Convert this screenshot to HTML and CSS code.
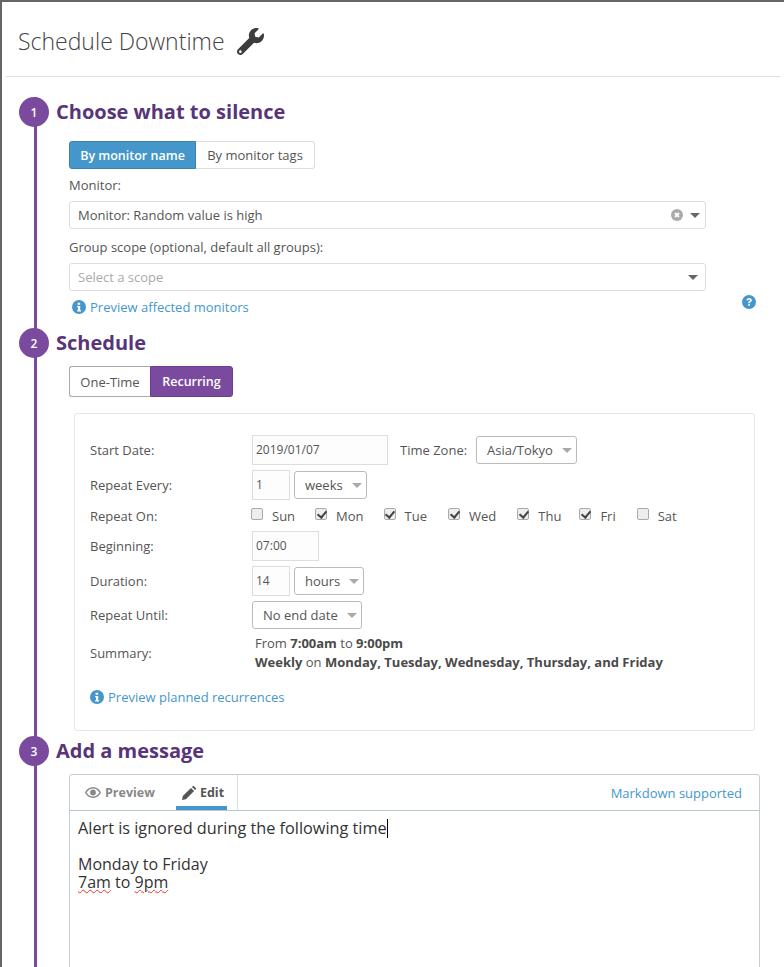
FILE: index.html
```html
<!DOCTYPE html>
<html lang="en">
<head>
<meta charset="utf-8">
<title>Schedule Downtime</title>
<link rel="stylesheet" href="styles.css">
</head>
<body>
<div class="frame">
  <header class="page-head">
    <h1 class="page-title">Schedule Downtime</h1>
    <svg class="wrench" viewBox="0 0 512 512"><path d="M507.730 109.100c-2.240-9.030-13.540-12.090-20.120-5.510l-74.360 74.360-67.880-11.310-11.310-67.880 74.360-74.360c6.620-6.620 3.430-17.900-5.660-20.160-47.380-11.740-99.550.91-136.580 37.930-39.640 39.640-50.550 97.100-34.050 147.200L18.740 402.760c-24.990 24.990-24.990 65.510 0 90.500 24.990 24.990 65.510 24.990 90.500 0l213.210-213.210c50.120 16.710 107.470 5.680 147.370-34.220 37.070-37.070 49.700-89.320 37.910-136.730zM64 472c-13.250 0-24-10.750-24-24 0-13.260 10.750-24 24-24s24 10.740 24 24c0 13.250-10.750 24-24 24z"/></svg>
  </header>

  <main class="steps">
    <div class="rail"></div>

    <section class="step step-one">
      <div class="step-head"><span class="badge">1</span><h2 class="step-title">Choose what to silence</h2></div>
      <div class="step-body">
        <div class="toggle toggle-blue">
          <span class="toggle-btn active">By monitor name</span><span class="toggle-btn">By monitor tags</span>
        </div>
        <div class="field-label first">Monitor:</div>
        <div class="combo">
          <span>Monitor: Random value is high</span>
          <span class="combo-tools">
            <svg class="clear" viewBox="0 0 12 12"><circle cx="6" cy="6" r="6" fill="#aaa"/><path d="M4 4l4 4M8 4l-4 4" stroke="#fff" stroke-width="1.800"/></svg>
            <i class="caret dark"></i>
          </span>
        </div>
        <div class="field-label">Group scope (optional, default all groups):</div>
        <div class="combo placeholder">
          <span>Select a scope</span>
          <span class="combo-tools"><i class="caret dark"></i></span>
        </div>
        <a class="link preview-affected">
          <svg class="info" viewBox="0 0 14 14"><circle cx="7" cy="7" r="7"/><path d="M5.600 2.700h2.600v2.100H5.600zM5.100 5.900h3.100v4.300h.9v1.300H5.100v-1.300H6V7.200h-.9z" fill="#fff"/></svg>Preview affected monitors
        </a>
        <svg class="help" viewBox="0 0 14 14"><circle cx="7" cy="7" r="7" fill="#4597cb"/><path d="M4.500 5.300C4.700 3.900 5.700 3 7.200 3c1.500 0 2.600.9 2.600 2.200 0 1-.6 1.500-1.300 1.900-.6.400-.7.600-.7 1.100H6.200c0-1 .3-1.500 1-2 .6-.4.900-.6.900-1 0-.4-.4-.7-.9-.7-.6 0-1 .3-1.100 1zM6.200 9h1.700v1.700H6.200z" fill="#fff"/></svg>
      </div>
    </section>

    <section class="step step-two">
      <div class="step-head"><span class="badge">2</span><h2 class="step-title">Schedule</h2></div>
      <div class="step-body">
        <div class="toggle toggle-purple">
          <span class="toggle-btn">One-Time</span><span class="toggle-btn active">Recurring</span>
        </div>
        <div class="panel">
          <div class="form-grid">
            <div class="row row-30">
              <span class="row-label">Start Date:</span>
              <span class="input w-date">2019/01/07</span>
              <span class="tz-label">Time Zone:</span>
              <span class="select w-tz">Asia/Tokyo<i class="caret"></i></span>
            </div>
            <div class="row row-30">
              <span class="row-label">Repeat Every:</span>
              <span class="input w-num">1</span>
              <span class="select w-weeks">weeks<i class="caret"></i></span>
            </div>
            <div class="row row-days">
              <span class="row-label">Repeat On:</span>
              <span class="days">
                <label class="day d-sun"><i class="box"></i>Sun</label>
                <label class="day d-mon"><i class="box checked"></i>Mon</label>
                <label class="day d-tue"><i class="box checked"></i>Tue</label>
                <label class="day d-wed"><i class="box checked"></i>Wed</label>
                <label class="day d-thu"><i class="box checked"></i>Thu</label>
                <label class="day d-fri"><i class="box checked"></i>Fri</label>
                <label class="day"><i class="box"></i>Sat</label>
              </span>
            </div>
            <div class="row row-30">
              <span class="row-label">Beginning:</span>
              <span class="input w-time">07:00</span>
            </div>
            <div class="row row-30">
              <span class="row-label">Duration:</span>
              <span class="input w-num">14</span>
              <span class="select w-hours">hours<i class="caret"></i></span>
            </div>
            <div class="row row-28">
              <span class="row-label">Repeat Until:</span>
              <span class="select w-end">No end date<i class="caret"></i></span>
            </div>
            <div class="row row-summary">
              <span class="row-label">Summary:</span>
              <div class="summary">
                <div>From <b>7:00am</b> to <b>9:00pm</b></div>
                <div><b>Weekly</b> on <b>Monday, Tuesday, Wednesday, Thursday, and Friday</b></div>
              </div>
            </div>
          </div>
          <a class="link preview-planned">
            <svg class="info" viewBox="0 0 14 14"><circle cx="7" cy="7" r="7"/><path d="M5.600 2.700h2.600v2.100H5.600zM5.100 5.900h3.100v4.300h.9v1.300H5.100v-1.300H6V7.200h-.9z" fill="#fff"/></svg>Preview planned recurrences
          </a>
        </div>
      </div>
    </section>

    <section class="step step-three">
      <div class="step-head"><span class="badge">3</span><h2 class="step-title">Add a message</h2></div>
      <div class="step-body">
        <div class="editor">
          <div class="tabs">
            <span class="tab">
              <svg class="tab-icon eye" viewBox="0 0 16 11"><path d="M8 0C4.500 0 1.500 2.100 0 5.500 1.500 8.900 4.500 11 8 11s6.500-2.100 8-5.500C14.500 2.100 11.500 0 8 0zm0 9.600C5.300 9.600 3 8 1.600 5.500 3 3 5.300 1.400 8 1.400S13 3 14.400 5.500C13 8 10.700 9.600 8 9.600zM8 2.600a2.900 2.900 0 1 0 0 5.800 2.900 2.900 0 0 0 0-5.800z"/></svg>Preview
            </span>
            <span class="tab tab-active">
              <svg class="tab-icon pencil" viewBox="0 0 14 14"><path d="M0 14l.8-3.900L9 1.900l3.100 3.100-8.200 8.200zM10 .9l.6-.6c.4-.4 1-.4 1.400 0l1.700 1.700c.4.400.4 1 0 1.400l-.6.600z"/></svg>Edit
            </span>
            <span class="tab-rule"></span>
            <a class="md-link">Markdown supported</a>
          </div>
          <div class="editor-body">
            <div class="msg-line msg-first">Alert is ignored during the following time<span class="cursor"></span></div>
            <div class="msg-line">&nbsp;</div>
            <div class="msg-line">Monday to Friday</div>
            <div class="msg-line msg-last"><span class="typo">7am</span> to <span class="typo">9pm</span></div>
          </div>
        </div>
      </div>
    </section>
  </main>
</div>
</body>
</html>
```

FILE: styles.css
```css
* { box-sizing: border-box; }
html, body { margin: 0; padding: 0; background: #fff; }
body {
  width: 784px;
  height: 967px;
  overflow: hidden;
  font-family: "Open Sans", "Noto Sans", sans-serif;
  font-size: 13px;
  color: #555;
}
.frame {
  height: 967px;
  border-top: 2px solid #666;
  border-left: 2px solid #666;
  overflow: hidden;
}
.page-head {
  display: flex;
  align-items: center;
  height: 75px;
  margin: 0 4px 0 4px;
  padding: 0 0 0 12px;
  border-bottom: 1px solid #ddd;
}
.page-title {
  margin: 0;
  font-size: 23px;
  font-weight: 300;
  color: #444;
  line-height: 78px;
  height: 75px;
}
.wrench { width: 27px; height: 27px; margin: 4px 0 0 12px; fill: #3d3d3d; }

.steps { position: relative; padding-left: 17px; }
.rail {
  position: absolute;
  left: 32px;
  top: 20px;
  bottom: 0;
  width: 3px;
  background: #7a4a9f;
}
.step { position: relative; }
.step-head { display: flex; align-items: center; height: 30px; }
.badge {
  flex: none;
  width: 30px;
  height: 30px;
  border-radius: 50%;
  background: #7a4a9f;
  color: #fff;
  font-size: 12px;
  font-weight: 600;
  display: flex;
  align-items: center;
  justify-content: center;
}
.step-title {
  margin: 0 0 2px 7px;
  font-size: 20px;
  font-weight: 700;
  color: #583579;
}
.step-body { position: relative; padding-left: 50px; }
.step-one { padding-top: 20px; }
.step-one .step-body { padding-top: 14px; height: 201px; }
.step-two .step-body { padding-top: 8px; height: 378px; }
.step-three .step-body { padding-top: 8px; }

.toggle { display: inline-flex; vertical-align: top; }
.toggle-btn {
  display: flex;
  align-items: center;
  justify-content: center;
  border: 1px solid #ddd;
  background: #fff;
  color: #555;
}
.toggle-btn.active { font-size: 12.500px; font-weight: 600; }
.toggle-blue { height: 28px; }
.toggle-blue .toggle-btn { width: 119px; border-radius: 0 3px 3px 0; border-left: 0; }
.toggle-blue .toggle-btn.active {
  width: 127px;
  background: #4597cb;
  border: 1px solid #3a82b0;
  border-radius: 3px 0 0 3px;
  color: #fff;
}
.toggle-purple { height: 31px; }
.toggle-purple .toggle-btn {
  width: 81px;
  border: 1px solid #aaa;
  border-right: 0;
  border-radius: 3px 0 0 3px;
}
.toggle-purple .toggle-btn.active {
  width: 83px;
  background: #7a4a9f;
  border: 1px solid #6b3f8e;
  border-radius: 0 3px 3px 0;
  color: #fff;
}

.field-label { height: 18px; line-height: 18px; margin-top: 9px; }
.field-label.first { margin-top: 7px; }
.combo {
  display: flex;
  align-items: center;
  justify-content: space-between;
  width: 637px;
  height: 28px;
  margin-top: 7px;
  padding: 0 5px 0 8px;
  border: 1px solid #ddd;
  border-radius: 3px;
  background: #fff;
}
.combo.placeholder { color: #aaa; padding-right: 7px; }
.combo-tools { display: flex; align-items: center; gap: 7px; }
.clear { width: 12px; height: 12px; }
.caret {
  display: inline-block;
  width: 0;
  height: 0;
  border-left: 5px solid transparent;
  border-right: 5px solid transparent;
  border-top: 5px solid #aaa;
}
.caret.dark { border-top-color: #666; }

.link { color: #4597cb; display: flex; align-items: center; }
.info { width: 14px; height: 14px; fill: #4597cb; margin-right: 4px; }
.preview-affected { height: 18px; margin: 7px 0 0 3px; }
.help { position: absolute; left: 723px; top: 168px; width: 14px; height: 14px; }

.panel {
  width: 681px;
  height: 318px;
  margin: 16px 0 0 5px;
  padding: 21px 15px 0;
  border: 1px solid #e6e6e6;
  border-radius: 3px;
}
.row { display: flex; align-items: center; }
.row-label { flex: none; width: 162px; }
.row-30 { height: 30px; margin-bottom: 5px; }
.row-28 { height: 28px; margin-bottom: 6px; }
.row-days { height: 22px; margin-bottom: 4px; }
.row-summary { height: 36px; }
.input {
  display: flex;
  align-items: center;
  height: 30px;
  padding: 0 0 2px 3px;
  border: 1px solid #ddd;
  background: #fdfdfd;
  font-size: 12px;
}
.w-date { width: 136px; }
.w-num { width: 38px; }
.w-time { width: 67px; }
.tz-label { margin: 0 9px 0 12px; }
.select {
  display: flex;
  align-items: center;
  justify-content: space-between;
  height: 28px;
  padding: 0 4px 0 10px;
  border: 1px solid #bbb;
  border-radius: 3px;
  background: #fff;
}
.input + .select { margin-left: 4px; }
.w-tz { width: 101px; }
.w-weeks { width: 73px; }
.w-hours { width: 70px; }
.w-end { width: 110px; }
.days { display: flex; margin-left: -1px; }
.day { display: flex; align-items: center; line-height: 18px; }
.d-sun { margin-right: 20px; }
.d-mon { margin-right: 20px; }
.d-tue { margin-right: 21px; }
.d-wed { margin-right: 21px; }
.d-thu { margin-right: 18px; }
.d-fri { margin-right: 21px; }
.box {
  position: relative;
  top: -2px;
  width: 12px;
  height: 12px;
  margin-right: 9px;
  border: 1px solid #aaa;
  border-radius: 2px;
  background: #eee;
}
.box.checked::after {
  content: "";
  position: absolute;
  left: 2.500px;
  top: 0;
  width: 4px;
  height: 7px;
  border: solid #444;
  border-width: 0 2px 2px 0;
  transform: rotate(40deg);
}
.summary { padding-left: 3px; line-height: 19px; }
.summary b { font-weight: 700; color: #4a4a4a; }
.preview-planned { height: 18px; margin-top: 17px; }

.editor {
  width: 691px;
  height: 300px;
  border: 1px solid #c3cdd5;
  border-radius: 3px 3px 0 0;
}
.tabs {
  display: flex;
  align-items: stretch;
  height: 36px;
  border-bottom: 1px solid #b8c6d2;
}
.tab {
  display: flex;
  align-items: center;
  height: 35px;
  font-size: 12.500px;
  font-weight: 700;
  color: #888;
  margin-left: 14px;
  padding: 0 1px;
}
.tab-active {
  color: #555;
  margin-left: 20px;
  padding: 4px 3px 0 6px;
  border-bottom: 4px solid #4597cb;
}
.tab-icon { fill: currentColor; margin-right: 4px; }
.eye { width: 16px; height: 11px; }
.pencil { width: 14px; height: 14px; }
.tab-rule { width: 1px; margin-left: 10px; background: #ddd; }
.md-link {
  margin-left: auto;
  margin-right: 17px;
  line-height: 37px;
  color: #4597cb;
}
.editor-body { padding: 8px 8px; font-size: 16px; color: #333; }
.msg-line { height: 18px; line-height: 18px; }
.msg-first { font-size: 16.250px; }
.msg-last { height: 22px; line-height: 18px; }
.cursor {
  display: inline-block;
  width: 1px;
  height: 19px;
  background: #000;
  vertical-align: -4px;
}
.typo {
  text-decoration: underline wavy #e33;
  text-decoration-thickness: 1px;
}
```
